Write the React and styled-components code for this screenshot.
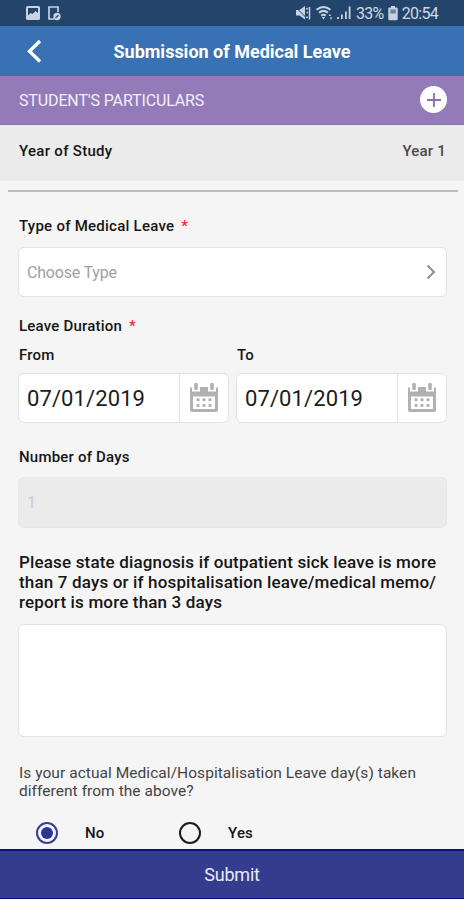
import React, { useState } from 'react';
import styled, { createGlobalStyle } from 'styled-components';

const CalendarIcon = () => (
  <svg width='28' height='30' viewBox='0 0 28 30'>
    <path
      fill='#b1b1b1'
      d='M0 4.5h3v3.2h6V4.5h1v-.5h8v.5h1v3.2h6V4.5h3V27a2 2 0 0 1-2 2H2a2 2 0 0 1-2-2z'
    />
    <path
      d='M2.700 4v3.900h6.600V4M18.700 4v3.900h6.600V4'
      fill='none'
      stroke='#fff'
      strokeWidth='1.400'
    />
    <rect x='4.2' y='0' width='3.6' height='7' rx='1.2' fill='#b1b1b1' />
    <rect x='20.2' y='0' width='3.6' height='7' rx='1.2' fill='#b1b1b1' />
    <rect x='3' y='13.5' width='22' height='12.5' fill='#fff' />
    {[8, 14, 20].map((cx) => (
      <g key={cx} fill='#b1b1b1'>
        <rect x={cx - 1.5} y='15.3' width='3' height='3' rx='0.8' />
        <rect x={cx - 1.5} y='21' width='3' height='3' rx='0.8' />
      </g>
    ))}
  </svg>
);

const StatusIcons = () => (
  <svg width='57' height='16' viewBox='0 0 57 16' fill='#c9d3df'>
    {/* muted speaker */}
    <path d='M1 5h3.5L10 1v13.5L4.5 10.5H1z' />
    <path d='M1 2.500l12 12' stroke='#23456c' strokeWidth='1' />
    <path
      d='M11.500 3l1 1.500M11.500 7.500h1.500M11.500 13l1-1.500M14.500 2v12.500'
      stroke='#c9d3df'
      strokeWidth='1.500'
    />
    {/* wifi */}
    <path
      d='M21.500 4.800Q28.500 -.8 35.500 4.800M24 7.800Q28.500 4 33 7.800M26.200 10.600Q28.500 8.800 30.800 10.600'
      fill='none'
      stroke='#c9d3df'
      strokeWidth='2'
    />
    <path d='M26.800 12h3.400L28.500 14.500zM33.500 11l1.300-2 1.300 2zM34.500 12.500h3l-1.500 2z' />
    {/* signal */}
    <path d='M42 12h2v2h-2zM46 9.500h1.800V14H46zM50 6.500h1.800V14H50zM53.700 1.500h1.800V14h-1.800z' />
  </svg>
);

const App = () => {
  const [isDifferent, setIsDifferent] = useState(false);

  return (
    <Screen>
      <GlobalStyle />
      <StatusBar>
        <StatusLeft>
          <svg width='35' height='15' viewBox='0 0 35 15'>
            <rect x='0' y='0' width='14' height='14' rx='1.500' fill='#c9d3df' />
            <path d='M2 2h10v5L9.500 5 6.500 8 4.500 7 2 9.500z' fill='#23456c' />
            <path
              d='M32 6V1H23v12h5'
              fill='none'
              stroke='#c9d3df'
              strokeWidth='1.700'
            />
            <circle cx='31' cy='10.500' r='3.700' fill='#c9d3df' />
            <path d='M29.500 11.800l3-2.500' stroke='#23456c' strokeWidth='1.200' />
          </svg>
        </StatusLeft>
        <StatusRight>
          <StatusIcons />
          <StatusText>33%</StatusText>
          <svg width='10' height='15' viewBox='0 0 10 15'>
            <path
              d='M3 0h4v1.500h1.500a1.200 1.200 0 0 1 1.200 1.200V13a1.200 1.200 0 0 1-1.200 1.200h-7A1.200 1.200 0 0 1 .3 13V2.700A1.200 1.200 0 0 1 1.500 1.500H3z'
              fill='#c9d3df'
            />
            <rect x='2.200' y='3.500' width='5.600' height='4' fill='#6d849d' />
          </svg>
          <StatusText>20:54</StatusText>
        </StatusRight>
      </StatusBar>

      <Header>
        <BackButton aria-label='Back'>
          <svg width='16' height='24' viewBox='0 0 16 24'>
            <path
              d='M14 2L3.500 12.300 14 22.500'
              fill='none'
              stroke='#fff'
              strokeWidth='3.400'
            />
          </svg>
        </BackButton>
        <HeaderTitle>Submission of Medical Leave</HeaderTitle>
      </Header>

      <SectionBar>
        <SectionTitle>STUDENT'S PARTICULARS</SectionTitle>
        <AddButton aria-label='Expand'>
          <svg width='16' height='16' viewBox='0 0 16 16'>
            <path d='M8 1v14M1 8h14' stroke='#8670ae' strokeWidth='1.800' />
          </svg>
        </AddButton>
      </SectionBar>

      <InfoRow>
        <InfoLabel>Year of Study</InfoLabel>
        <InfoValue>Year 1</InfoValue>
      </InfoRow>
      <Divider />

      <Form>
        <Label $top={24} $spacing={0.25}>
          Type of Medical Leave <Required>*</Required>
        </Label>
        <Select>
          <Placeholder>Choose Type</Placeholder>
          <svg width='10' height='16' viewBox='0 0 10 16'>
            <path
              d='M1.500 1.500L8 8l-6.500 6.500'
              fill='none'
              stroke='#8d8d8d'
              strokeWidth='2'
            />
          </svg>
        </Select>

        <Label $top={19}>
          Leave Duration <Required>*</Required>
        </Label>
        <DateRow>
          {['From', 'To'].map((name) => (
            <DateColumn key={name}>
              <Label $top={9}>{name}</Label>
              <DateField>
                <DateValue>07/01/2019</DateValue>
                <CalendarButton aria-label={name}>
                  <CalendarIcon />
                </CalendarButton>
              </DateField>
            </DateColumn>
          ))}
        </DateRow>

        <Label $top={24}>Number of Days</Label>
        <DisabledField>1</DisabledField>

        <DiagnosisLabel>
          Please state diagnosis if outpatient sick leave is more
          <br />
          than 7 days or if hospitalisation leave/medical memo/
          <br />
          report is more than 3 days
        </DiagnosisLabel>
        <TextArea />

        <Question>
          Is your actual Medical/Hospitalisation Leave day(s) taken
          <br />
          different from the above?
        </Question>
        <RadioGroup>
          <RadioOption $width={143} onClick={() => setIsDifferent(false)}>
            <RadioCircle $checked={!isDifferent} />
            No
          </RadioOption>
          <RadioOption onClick={() => setIsDifferent(true)}>
            <RadioCircle $checked={isDifferent} />
            Yes
          </RadioOption>
        </RadioGroup>
      </Form>

      <SubmitButton>Submit</SubmitButton>
    </Screen>
  );
};

export default App;

const GlobalStyle = createGlobalStyle`
  * {
    box-sizing: border-box;
  }

  body {
    margin: 0;
    background: #f5f5f5;
  }

  button,
  textarea {
    font-family: inherit;
  }
`;

const Screen = styled.div`
  display: flex;
  flex-direction: column;
  width: 464px;
  height: 900px;
  overflow: hidden;
  background: #f5f5f5;
  color: #161616;
  font-family: Roboto, sans-serif;
`;

const StatusBar = styled.div`
  display: flex;
  flex-shrink: 0;
  justify-content: space-between;
  align-items: center;
  height: 26px;
  padding: 0 26px;
  background: #23456c;
`;

const StatusLeft = styled.div`
  display: flex;
`;

const StatusRight = styled.div`
  display: flex;
  align-items: center;
  gap: 4px;

  svg {
    flex-shrink: 0;
  }
`;

const StatusText = styled.span`
  color: #d0d9e3;
  font-size: 16px;
  line-height: 26px;
  letter-spacing: -0.7px;
  padding-top: 1px;
`;

const Header = styled.header`
  display: grid;
  grid-template-columns: 60px 1fr 60px;
  align-items: center;
  flex-shrink: 0;
  height: 50px;
  background: #3872b5;
`;

const BackButton = styled.button`
  display: flex;
  padding: 0 0 0 26px;
  background: none;
  border: none;
  cursor: pointer;
`;

const HeaderTitle = styled.h1`
  margin: 0;
  padding-top: 2px;
  color: #fff;
  font-size: 18px;
  font-weight: 700;
  line-height: 24px;
  text-align: center;
  white-space: nowrap;
`;

const SectionBar = styled.div`
  display: flex;
  align-items: center;
  justify-content: space-between;
  flex-shrink: 0;
  height: 49px;
  padding: 0 17px 0 19px;
  background: #927bb8;
  border-bottom: 1px solid #8a72b1;
`;

const SectionTitle = styled.h2`
  margin: 0;
  padding-top: 1px;
  color: #f4eff9;
  font-size: 16px;
  font-weight: 400;
  line-height: 20px;
  letter-spacing: -0.13px;
`;

const AddButton = styled.button`
  display: flex;
  align-items: center;
  justify-content: center;
  width: 27px;
  height: 27px;
  margin-top: -1px;
  padding: 0;
  background: #fff;
  border: none;
  border-radius: 50%;
  cursor: pointer;
`;

const InfoRow = styled.div`
  display: flex;
  justify-content: space-between;
  flex-shrink: 0;
  height: 56px;
  padding: 16px 18px 0 19px;
  background: #ebebeb;
  font-size: 15px;
  font-weight: 500;
  line-height: 20px;
`;

const InfoLabel = styled.span`
  letter-spacing: 0.3px;
`;

const InfoValue = styled.span`
  color: #4a4a4a;
  letter-spacing: 0.2px;
`;

const Divider = styled.hr`
  flex-shrink: 0;
  width: 450px;
  height: 2px;
  margin: 9px 6px 0 8px;
  background: #bcbcbc;
  border: none;
`;

const Form = styled.main`
  display: flex;
  flex: 1;
  flex-direction: column;
  min-height: 0;
  padding: 0 17px 0 18px;
`;

const Label = styled.div`
  flex-shrink: 0;
  height: 20px;
  margin-top: ${(props) => props.$top}px;
  padding-left: 1px;
  font-size: 15px;
  font-weight: 500;
  line-height: 20px;
  letter-spacing: ${(props) => props.$spacing || 0.2}px;
`;

const Required = styled.span`
  margin-left: 3px;
  color: #f3292c;
`;

const Field = styled.div`
  display: flex;
  align-items: center;
  flex-shrink: 0;
  height: 50px;
  background: #fff;
  border: 1px solid #e2e2e2;
  border-radius: 6px;
`;

const Select = styled(Field)`
  justify-content: space-between;
  margin-top: 11px;
  padding: 0 10px 0 8px;
  cursor: pointer;
`;

const Placeholder = styled.span`
  color: #a0a0a0;
  font-size: 16px;
  letter-spacing: -0.2px;
`;

const DateRow = styled.div`
  display: grid;
  grid-template-columns: 1fr 1fr;
  gap: 7px;
`;

const DateColumn = styled.div`
  display: flex;
  flex-direction: column;
`;

const DateField = styled(Field)`
  align-items: stretch;
  margin-top: 8px;
`;

const DateValue = styled.span`
  flex: 1;
  padding-left: 8px;
  color: #1c1c1c;
  font-size: 22px;
  line-height: 50px;
  letter-spacing: 0.1px;
`;

const CalendarButton = styled.button`
  display: flex;
  align-items: center;
  justify-content: center;
  width: 49px;
  padding: 0;
  background: none;
  border: none;
  border-left: 1px solid #e2e2e2;
  cursor: pointer;
`;

const DisabledField = styled(Field)`
  height: 51px;
  margin-top: 10px;
  padding-left: 8px;
  background: #ebebeb;
  border-color: #e6e6e6;
  color: #cacaca;
  font-size: 16px;
`;

const DiagnosisLabel = styled.p`
  flex-shrink: 0;
  margin: 24px 0 12px;
  padding-left: 1px;
  font-size: 17px;
  font-weight: 500;
  line-height: 20px;
  letter-spacing: 0.16px;
  white-space: nowrap;
`;

const TextArea = styled.textarea`
  flex-shrink: 0;
  height: 113px;
  background: #fff;
  border: 1px solid #e2e2e2;
  border-radius: 6px;
  resize: none;
`;

const Question = styled.p`
  flex-shrink: 0;
  margin: 27px 0 21px;
  padding-left: 1px;
  color: #444;
  font-size: 15.5px;
  line-height: 18px;
  letter-spacing: 0.05px;
  white-space: nowrap;
`;

const RadioGroup = styled.div`
  display: flex;
  padding-left: 18px;
`;

const RadioOption = styled.div`
  display: flex;
  align-items: center;
  gap: 27px;
  width: ${(props) => (props.$width ? `${props.$width}px` : 'auto')};
  height: 23px;
  font-size: 15px;
  font-weight: 500;
  letter-spacing: 0.2px;
  cursor: pointer;
`;

const RadioCircle = styled.span`
  display: flex;
  align-items: center;
  justify-content: center;
  width: 22px;
  height: 22px;
  border: 2px solid ${(props) => (props.$checked ? '#333f9a' : '#1c1c1c')};
  border-radius: 50%;

  &::after {
    content: '';
    width: 12px;
    height: 12px;
    background: ${(props) => (props.$checked ? '#2b3595' : 'transparent')};
    border-radius: 50%;
  }
`;

const SubmitButton = styled.button`
  flex-shrink: 0;
  height: 50px;
  margin-bottom: 1px;
  padding: 0;
  background: #343c8d;
  border: solid #11117a;
  border-width: 2px 0 1px;
  color: #e8ebf8;
  font-size: 18px;
  letter-spacing: -0.2px;
  cursor: pointer;
`;
